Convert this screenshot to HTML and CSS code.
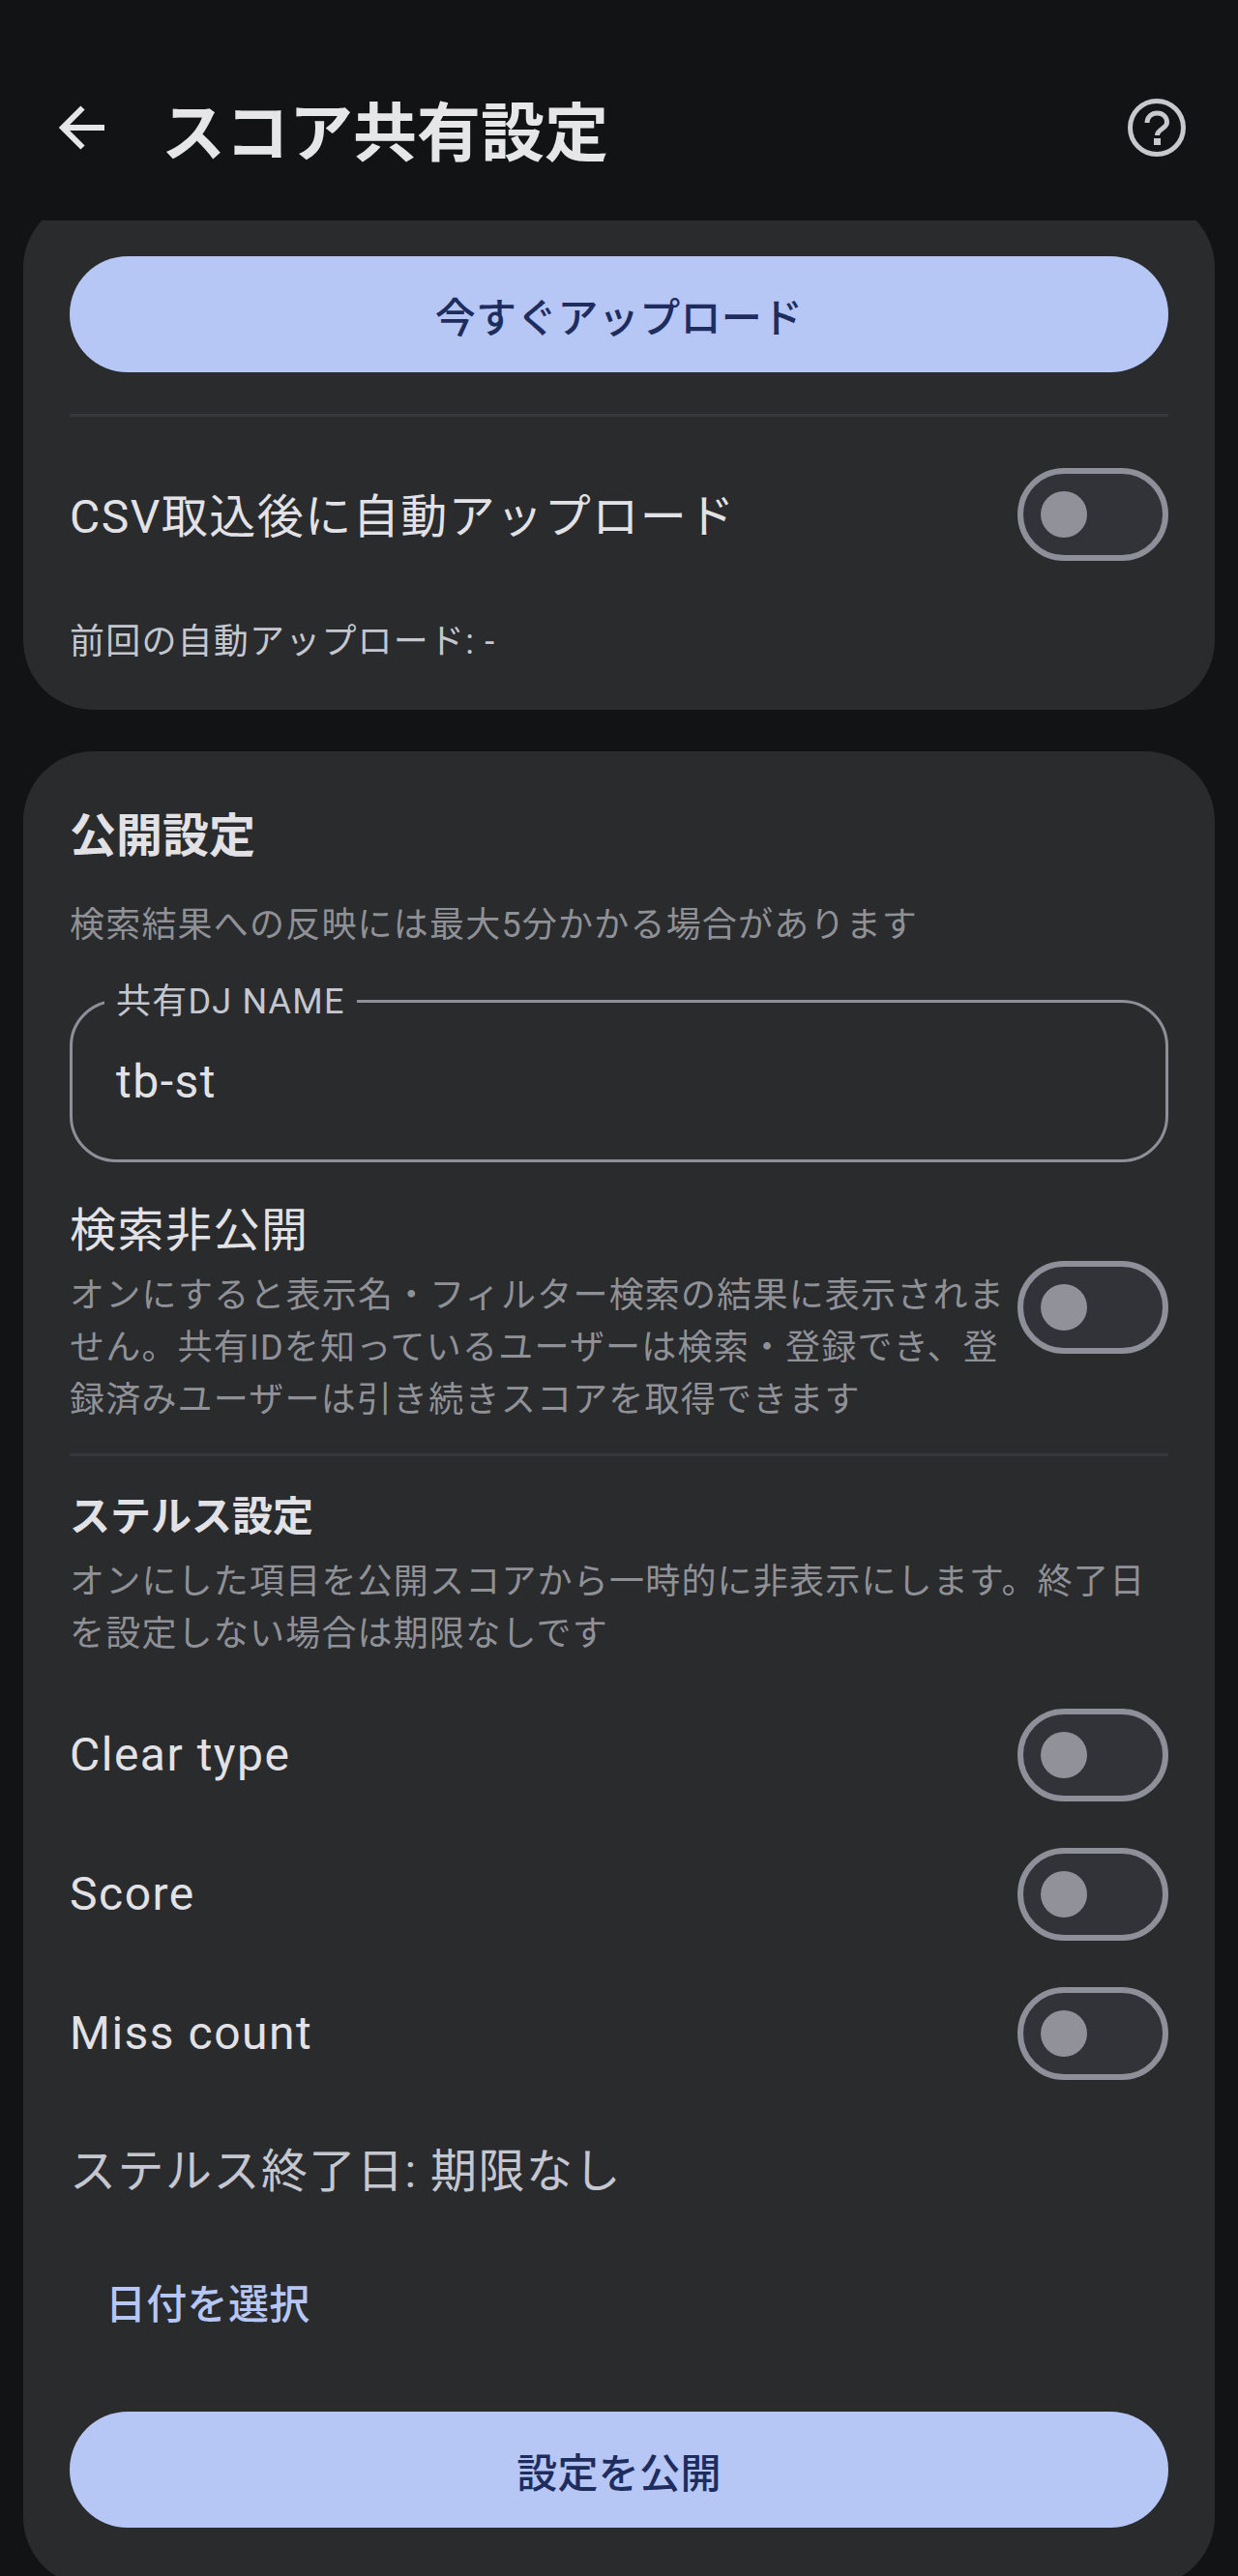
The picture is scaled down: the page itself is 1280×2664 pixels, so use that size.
FILE: index.html
```html
<!DOCTYPE html>
<html lang="ja">

<head>
    <meta charset="UTF-8">
    <meta name="viewport" content="width=device-width, initial-scale=1.0">
    <title>スコア共有設定</title>
    <link rel="stylesheet" href="styles.css">
</head>

<body>

    <header class="top-bar">
        <svg class="back-icon" viewBox="0 0 48 48">
            <path d="M48 24H5M25.500 3.500L5 24l20.500 20.500" />
        </svg>
        <h1>スコア共有設定</h1>
        <svg class="help-icon" viewBox="0 0 60 60">
            <circle cx="30" cy="30" r="27.500" />
            <path d="M20 25c0-6 4.500-10 10.500-10s10 4 10 9.500c0 6.500-10 7-10 13.500" />
            <rect x="27" y="41" width="7" height="7" />
        </svg>
    </header>

    <main class="content">
        <section class="card upload-card">
            <button class="primary-button">今すぐアップロード</button>
            <div class="divider"></div>
            <div class="setting-row auto-row">
                <span class="row-label">CSV取込後に自動アップロード</span>
                <div class="switch"><div class="thumb"></div></div>
            </div>
            <p class="last-upload">前回の自動アップロード: -</p>
        </section>

        <section class="card publish-card">
            <h2 class="card-title">公開設定</h2>
            <p class="hint">検索結果への反映には最大5分かかる場合があります</p>
            <div class="text-field">
                <span class="field-label">共有DJ NAME</span>
                <span class="field-value">tb-st</span>
            </div>
            <div class="setting-row hidden-row">
                <div class="row-text">
                    <div class="row-label">検索非公開</div>
                    <p class="hint">オンにすると表示名・フィルター検索の結果に表示されません。共有IDを知っているユーザーは検索・登録でき、登録済みユーザーは引き続きスコアを取得できます</p>
                </div>
                <div class="switch"><div class="thumb"></div></div>
            </div>
            <div class="divider"></div>
            <h3 class="stealth-title">ステルス設定</h3>
            <p class="hint">オンにした項目を公開スコアから一時的に非表示にします。終了日を設定しない場合は期限なしです</p>
            <div class="stealth-list">
                <div class="setting-row">
                    <span class="row-label">Clear type</span>
                    <div class="switch"><div class="thumb"></div></div>
                </div>
                <div class="setting-row">
                    <span class="row-label">Score</span>
                    <div class="switch"><div class="thumb"></div></div>
                </div>
                <div class="setting-row">
                    <span class="row-label">Miss count</span>
                    <div class="switch"><div class="thumb"></div></div>
                </div>
            </div>
            <p class="end-date">ステルス終了日: 期限なし</p>
            <button class="text-button">日付を選択</button>
            <button class="primary-button">設定を公開</button>
        </section>
    </main>

</body>

</html>
```

FILE: styles.css
```css
* {
    box-sizing: border-box;
}

html,
body {
    height: 100%;
}

body {
    margin: 0;
    display: flex;
    flex-direction: column;
    overflow: hidden;
    background-color: #121315;
    color: #e2e2e6;
    font-family: Roboto, "Noto Sans CJK JP", sans-serif;
}

h1,
h2,
h3,
p {
    margin: 0;
    font-weight: normal;
}

button {
    display: block;
    border: 0;
    font-family: inherit;
    font-size: 42px;
    font-weight: 500;
    letter-spacing: 0.3px;
}

.top-bar {
    flex: none;
    display: flex;
    align-items: center;
    height: 228px;
    padding: 36px 34px 0 60px;
}

.top-bar h1 {
    flex: 1;
    margin-left: 59px;
    font-size: 66px;
    font-weight: 700;
    color: #e6e6e8;
}

.back-icon {
    width: 48px;
    height: 48px;
    fill: none;
    stroke: #e6e6e8;
    stroke-width: 6;
}

.help-icon {
    width: 60px;
    height: 60px;
    margin-right: 20px;
    fill: none;
    stroke: #c8c9ce;
    stroke-width: 5;
}

.help-icon rect {
    fill: #c8c9ce;
    stroke: none;
}

.content {
    flex: 1;
    overflow: hidden;
    padding: 0 24px;
}

.card {
    border-radius: 72px;
    background-color: #292b2d;
}

.upload-card {
    margin-top: -23px;
    padding: 60px 48px 43px;
}

.publish-card {
    margin-top: 43px;
    padding: 52px 48px 61px;
}

.primary-button {
    width: 100%;
    height: 120px;
    border-radius: 60px;
    background-color: #b6c6f5;
    color: #1e2d5e;
}

.text-button {
    height: 120px;
    margin: 37px 0 55px;
    padding: 0 37px;
    background: none;
    color: #b6c6f5;
}

.divider {
    height: 3px;
    background-color: #36383b;
}

.upload-card .divider {
    margin-top: 43px;
}

.setting-row {
    display: flex;
    align-items: center;
    justify-content: space-between;
    gap: 10px;
}

.auto-row {
    margin-top: 53px;
}

.auto-row .row-label {
    padding-top: 6px;
}

.row-label {
    font-size: 48px;
    letter-spacing: 1.500px;
    line-height: 72px;
}

.switch {
    flex: none;
    width: 156px;
    height: 96px;
    padding: 18px;
    border: 6px solid #8e9099;
    border-radius: 48px;
    background-color: #323338;
}

.thumb {
    width: 48px;
    height: 48px;
    border-radius: 50%;
    background-color: #909199;
}

.last-upload {
    margin-top: 57px;
    font-size: 36px;
    letter-spacing: 1.200px;
    line-height: 54px;
    color: #c4c6d0;
}

.card-title {
    font-size: 48px;
    font-weight: 700;
    line-height: 72px;
}

.hint {
    font-size: 36px;
    letter-spacing: 1.200px;
    line-height: 54px;
    color: #8f9196;
}

.card-title + .hint {
    margin-top: 29px;
}

.text-field {
    position: relative;
    height: 168px;
    margin-top: 50px;
    padding: 0 45px;
    display: flex;
    align-items: center;
    border: 3px solid #8e9099;
    border-radius: 48px;
}

.field-label {
    position: absolute;
    top: -25px;
    left: 33px;
    padding: 0 12px;
    font-size: 36px;
    letter-spacing: 1.200px;
    line-height: 48px;
    color: #c4c6d0;
    background-color: #292b2d;
}

.field-value {
    font-size: 48px;
    letter-spacing: 1.500px;
}

.hidden-row {
    margin-top: 35px;
    margin-bottom: 28px;
}

.hidden-row .row-label {
    margin-bottom: 4px;
}

.hidden-row .switch {
    margin-bottom: 8px;
}

.stealth-title {
    margin-top: 33px;
    margin-bottom: 10px;
    font-size: 42px;
    font-weight: 700;
    line-height: 60px;
}

.stealth-list {
    display: flex;
    flex-direction: column;
    gap: 48px;
    margin-top: 50px;
}

.end-date {
    margin-top: 59px;
    font-size: 48px;
    letter-spacing: 1.500px;
    line-height: 72px;
    color: #c4c6d0;
}
```
